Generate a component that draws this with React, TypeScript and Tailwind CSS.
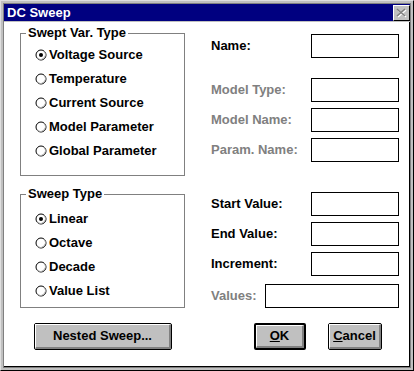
import React from "react";

const Radio = ({ checked }: { checked?: boolean }) => (
  <svg width="12" height="12" viewBox="0 0 12 12" className="shrink-0">
    <circle cx="6" cy="6" r="5" fill="#fff" stroke="#000" />
    <path d="M9.5 2.5 A5 5 0 0 1 2.5 9.5" fill="none" stroke="#b0b0b0" />
    {checked && <circle cx="6" cy="6" r="2" fill="#000" />}
  </svg>
);

const RadioRow = ({ label, checked }: { label: string; checked?: boolean }) => (
  <div className="flex items-center gap-[2px] h-[24px]">
    <Radio checked={checked} />
    <span>{label}</span>
  </div>
);

const Field = ({ label, disabled, wide }: { label: string; disabled?: boolean; wide?: boolean }) => (
  <div className="flex items-center h-[24px]">
    <span className={disabled ? "text-[#808080]" : "text-black"}>{label}</span>
    <div className={`ml-auto h-[24px] border border-black bg-white ${wide ? "w-[134px]" : "w-[88px]"}`} />
  </div>
);

const Button = ({ children, isDefault, className }: { children: React.ReactNode; isDefault?: boolean; className?: string }) => (
  <button
    className={`h-[27px] rounded-[2px] bg-[#c0c0c0] ${isDefault ? "border-2" : "border"} border-black ${className ?? ""}`}
  >
    <div className="h-full flex items-center justify-center border-t border-l border-white border-r-2 border-b-2 border-r-[#808080] border-b-[#808080]">
      {children}
    </div>
  </button>
);

export default function App() {
  return (
    <div className="w-[414px] h-[371px] bg-[#c0c0c0] border-t border-l border-[#dfdfdf] border-r border-b border-r-black border-b-black p-[2px] font-['Liberation_Sans',Arial,sans-serif] font-bold text-[13px] leading-[14px] text-black">
      <div className="h-full flex flex-col border border-[#808080]">
        {/* title bar */}
        <div className="h-[18px] bg-[#000080] flex items-center justify-between pl-[3px] pr-0 border-b border-[#c0c0c0]">
          <span className="text-white">DC Sweep</span>
          <div className="w-[17px] h-[16px] bg-[#c0c0c0] border-t border-l border-white border-r border-b border-r-black border-b-black flex items-center justify-center">
            <svg width="11" height="10" viewBox="0 0 11 10">
              <path d="M2 2 L10 9 M10 2 L2 9" stroke="#fff" strokeWidth="1.6" />
              <path d="M1 1 L9 8 M9 1 L1 8" stroke="#808080" strokeWidth="1.6" />
            </svg>
          </div>
        </div>

        {/* body */}
        <div className="flex-1 bg-white flex border-r border-b border-black">
          {/* left column */}
          <div className="w-[181px] pl-[16px] pt-[4px] flex flex-col">
            <fieldset className="border border-[#808080] pb-[12px]">
              <legend className="ml-[5px] px-[2px]">Swept Var. Type</legend>
              <div className="pl-[14px] pt-[3px]">
                <RadioRow label="Voltage Source" checked />
                <RadioRow label="Temperature" />
                <RadioRow label="Current Source" />
                <RadioRow label="Model Parameter" />
                <RadioRow label="Global Parameter" />
              </div>
            </fieldset>

            <fieldset className="mt-[11px] border border-[#808080] pb-[4px]">
              <legend className="ml-[5px] px-[2px]">Sweep Type</legend>
              <div className="pl-[14px] pt-[6px]">
                <RadioRow label="Linear" checked />
                <RadioRow label="Octave" />
                <RadioRow label="Decade" />
                <RadioRow label="Value List" />
              </div>
            </fieldset>

            <Button className="mt-[15px] ml-[14px] w-[138px]">Nested Sweep...</Button>
          </div>

          {/* right column */}
          <div className="flex-1 pl-[26px] pr-[10px] pt-[12px] flex flex-col">
            <Field label="Name:" />
            <div className="mt-[20px] flex flex-col gap-[6px]">
              <Field label="Model Type:" disabled />
              <Field label="Model Name:" disabled />
              <Field label="Param. Name:" disabled />
            </div>
            <div className="mt-[30px] flex flex-col gap-[6px]">
              <Field label="Start Value:" />
              <Field label="End Value:" />
              <Field label="Increment:" />
            </div>
            <div className="mt-[8px]">
              <Field label="Values:" disabled wide />
            </div>
            <div className="mt-[15px] flex gap-[22px] pl-[43px]">
              <Button isDefault className="w-[52px]">
                <span><span className="underline">O</span>K</span>
              </Button>
              <Button className="w-[54px]">
                <span><span className="underline">C</span>ancel</span>
              </Button>
            </div>
          </div>
        </div>
      </div>
    </div>
  );
}
